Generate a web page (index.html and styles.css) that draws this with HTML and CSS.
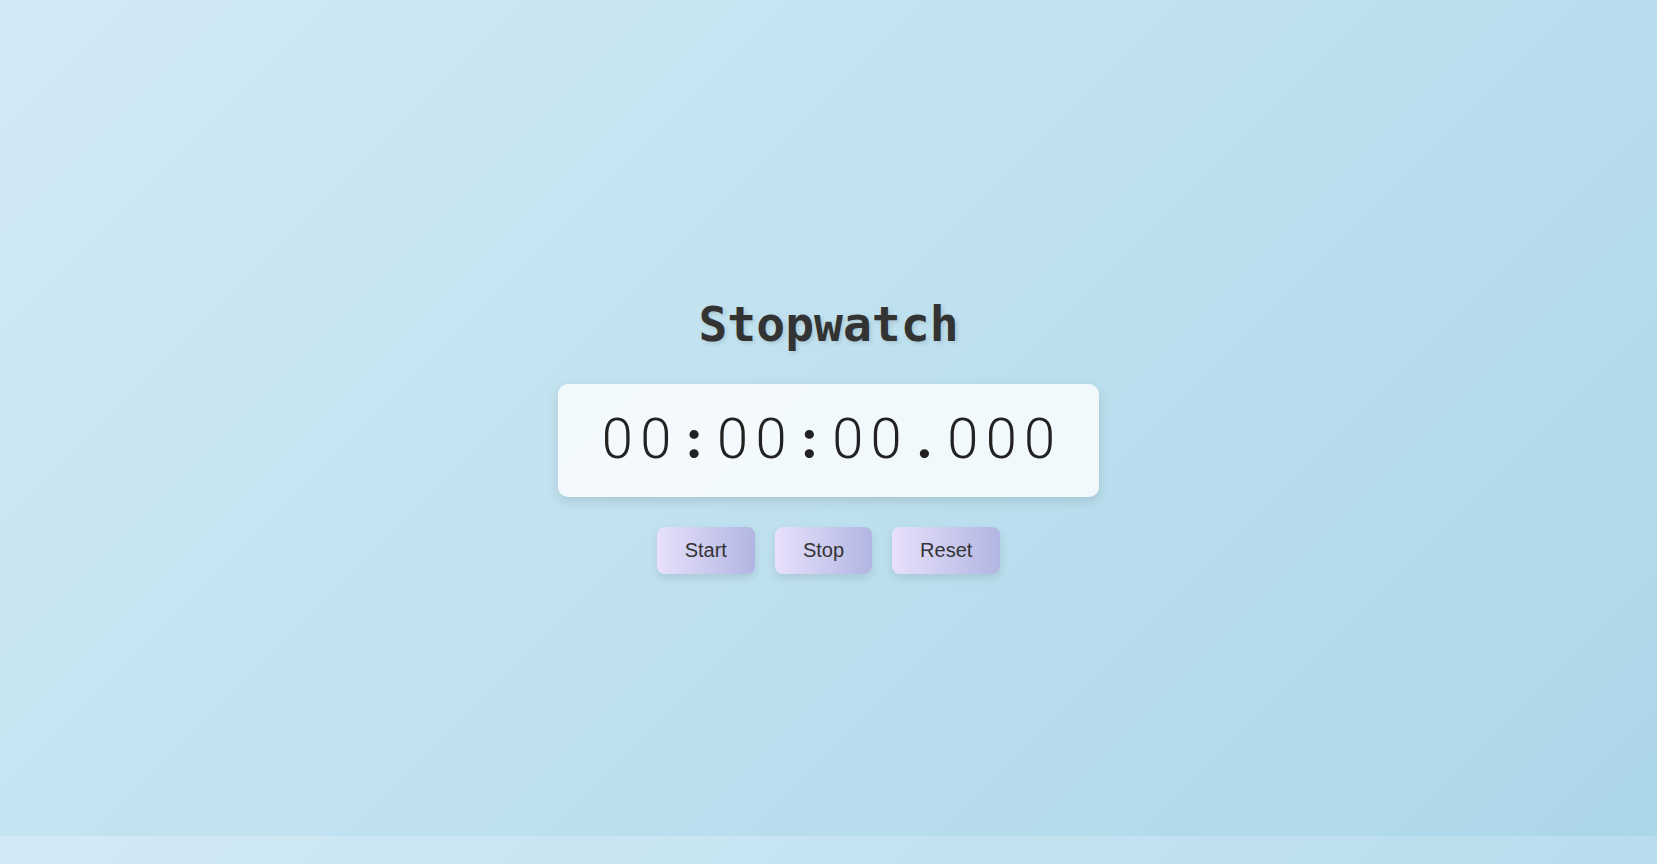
FILE: index.html
```html
<!DOCTYPE html>
<html lang="en">
<head>
<meta charset="utf-8">
<title>Stopwatch</title>
<link rel="stylesheet" href="styles.css">
</head>
<body>
<h1 class="title">Stopwatch</h1>
<div class="display"><span class="ch">0</span><span class="ch">0</span><span class="ch sep">:</span><span class="ch">0</span><span class="ch">0</span><span class="ch sep">:</span><span class="ch">0</span><span class="ch">0</span><span class="ch sep">.</span><span class="ch">0</span><span class="ch">0</span><span class="ch">0</span></div>
<div class="controls">
  <button class="btn">Start</button>
  <button class="btn">Stop</button>
  <button class="btn">Reset</button>
</div>
</body>
</html>
```
FILE: styles.css
```css
html {
  margin: 0;
}
body {
  margin: 0;
  box-sizing: border-box;
  height: calc(100vh - 28px);
  padding-top: 34px;
  display: flex;
  flex-direction: column;
  align-items: center;
  justify-content: center;
  font-family: "Liberation Sans", Arial, sans-serif;
  background: linear-gradient(135deg, #d2eaf5 0%, #acd7e9 100%);
}
.title {
  margin: 0 0 32px;
  font-family: "DejaVu Sans Mono", monospace;
  font-weight: bold;
  font-size: 48px;
  line-height: 56px;
  color: #333;
  text-shadow: 2px 2px 4px rgba(0, 0, 0, 0.12);
}
.display {
  display: flex;
  align-items: baseline;
  padding: 17px 40px 22px;
  background: rgba(255, 255, 255, 0.8);
  border-radius: 10px;
  box-shadow: 0 4px 12px rgba(0, 0, 0, 0.12);
  font-family: "Roboto", sans-serif;
  font-weight: 300;
  font-size: 56px;
  line-height: 72px;
  color: #222;
}
.ch {
  width: 38.4px;
  text-align: center;
}
.sep {
  font-family: "Lato", sans-serif;
  font-weight: 900;
}
.controls {
  display: flex;
  gap: 20px;
  margin-top: 30px;
}
.btn {
  border: none;
  border-radius: 8px;
  padding: 12px 28px;
  font-family: "Liberation Sans", Arial, sans-serif;
  font-size: 20px;
  line-height: 23px;
  color: #333;
  background: linear-gradient(to right, #e8e0fc, #b1b6e2);
  box-shadow: 0 4px 8px rgba(0, 0, 0, 0.1);
  cursor: pointer;
}
```
